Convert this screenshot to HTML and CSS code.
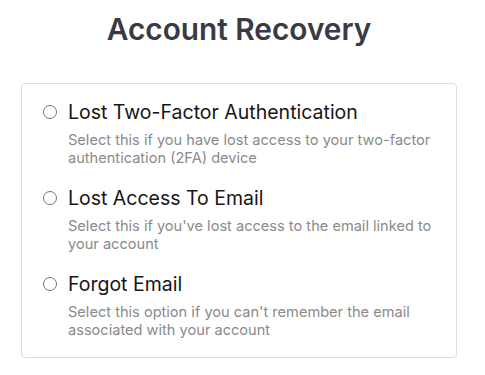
FILE: index.html
```html
<!DOCTYPE html>
<html>
<head>
<meta charset="utf-8">
<link rel="stylesheet" href="styles.css">
</head>
<body>
<main class="page">
  <h1 class="title">Account Recovery</h1>
  <div class="card">
    <label class="option">
      <span class="radio"></span>
      <span class="text">
        <span class="label">Lost Two-Factor Authentication</span>
        <span class="desc">Select this if you have lost access to your two-factor authentication (2FA) device</span>
      </span>
    </label>
    <label class="option">
      <span class="radio"></span>
      <span class="text">
        <span class="label">Lost Access To Email</span>
        <span class="desc">Select this if you've lost access to the email linked to your account</span>
      </span>
    </label>
    <label class="option">
      <span class="radio"></span>
      <span class="text">
        <span class="label">Forgot Email</span>
        <span class="desc">Select this option if you can't remember the email associated with your account</span>
      </span>
    </label>
  </div>
</main>
</body>
</html>
```
FILE: styles.css
```css
* { box-sizing: border-box; }
html, body { margin: 0; background: #fff; }
body { font-family: Inter, "Noto Sans", sans-serif; }
.page { width: 485px; padding: 9px 28px 0 21px; }
.title {
  margin: 0 0 34px 0;
  text-align: center;
  font-size: 29.8px;
  font-weight: 600;
  color: #3a3a44;
  line-height: 40px;
}
.card {
  border: 1px solid #dedede;
  border-radius: 4px;
  padding: 15px 20px 18px 21px;
  display: flex;
  flex-direction: column;
  gap: 18px;
}
.option { display: flex; gap: 11px; align-items: flex-start; }
.radio {
  flex: none;
  width: 14px; height: 14px;
  border: 1px solid #747474;
  border-radius: 50%;
  margin-top: 6px;
}
.text { display: flex; flex-direction: column; }
.label { font-size: 19.5px; color: #161616; line-height: 26px; }
.desc { font-size: 14.6px; color: #8a8a8a; line-height: 18px; margin-top: 6px; }
```
